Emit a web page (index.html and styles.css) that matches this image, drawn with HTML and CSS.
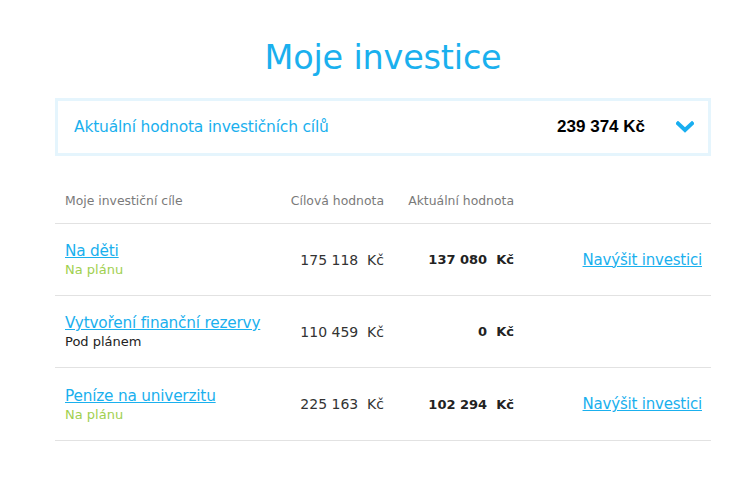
FILE: index.html
```html
<!DOCTYPE html>
<html lang="cs">
<head>
<meta charset="utf-8">
<title>Moje investice</title>
<link rel="stylesheet" href="styles.css">
</head>
<body>
<main class="page">
  <h1 class="title">Moje investice</h1>
  <div class="summary">
    <span class="summary-label">Aktuální hodnota investičních cílů</span>
    <span class="summary-value">239 374 Kč</span>
    <svg class="chevron" width="18" height="12" viewBox="0 0 18 12"><path d="M2 2.5 L9 9 L16 2.5" fill="none" stroke="#19aef0" stroke-width="4" stroke-linecap="square"/></svg>
  </div>
  <table class="goals">
    <colgroup>
      <col class="w-name">
      <col class="w-target">
      <col class="w-current">
      <col>
    </colgroup>
    <thead>
      <tr>
        <th class="c-name">Moje investiční cíle</th>
        <th class="c-num">Cílová hodnota</th>
        <th class="c-num">Aktuální hodnota</th>
        <th class="c-act"></th>
      </tr>
    </thead>
    <tbody>
      <tr>
        <td class="c-name"><a href="#" class="goal">Na děti</a><div class="status ok">Na plánu</div></td>
        <td class="c-num">175 118&nbsp; Kč</td>
        <td class="c-num strong">137 080&nbsp; Kč</td>
        <td class="c-act"><a href="#" class="more">Navýšit investici</a></td>
      </tr>
      <tr>
        <td class="c-name"><a href="#" class="goal">Vytvoření finanční rezervy</a><div class="status">Pod plánem</div></td>
        <td class="c-num">110 459&nbsp; Kč</td>
        <td class="c-num strong">0&nbsp; Kč</td>
        <td class="c-act"></td>
      </tr>
      <tr>
        <td class="c-name"><a href="#" class="goal">Peníze na univerzitu</a><div class="status ok">Na plánu</div></td>
        <td class="c-num">225 163&nbsp; Kč</td>
        <td class="c-num strong">102 294&nbsp; Kč</td>
        <td class="c-act"><a href="#" class="more">Navýšit investici</a></td>
      </tr>
    </tbody>
  </table>
</main>
</body>
</html>
```
FILE: styles.css
```css
html, body {
  margin: 0;
  padding: 0;
  background: #fff;
}
body {
  font-family: "DejaVu Sans", "Liberation Sans", sans-serif;
  color: #222;
}
.page {
  width: 656px;
  margin-left: 55px;
  padding-top: 35px;
}
.title {
  margin: 0;
  text-align: center;
  font-weight: 400;
  font-size: 33.5px;
  line-height: 46px;
  color: #1ab0ee;
  letter-spacing: -0.2px;
}
.summary {
  margin-top: 17px;
  height: 52px;
  border: 3px solid #e5f5fd;
  display: flex;
  align-items: center;
  padding: 0 14px 0 16px;
}
.summary-label {
  flex: 1;
  color: #1ab0ee;
  font-size: 15.5px;
  font-weight: 400;
  letter-spacing: -0.2px;
}
.summary-value {
  font-family: "Liberation Sans", Arial, sans-serif;
  font-weight: bold;
  font-size: 17px;
  color: #000;
  margin-right: 31px;
}
.chevron {
  display: block;
}
.goals {
  margin-top: 22px;
  width: 100%;
  border-collapse: collapse;
  table-layout: fixed;
}
.w-name { width: 219px; }
.w-target { width: 110px; }
.w-current { width: 130px; }
.goals th {
  font-weight: 400;
  font-size: 12.4px;
  color: #7a7a7a;
  height: 45px;
  padding: 0;
  border-bottom: 1px solid #e2e2e2;
  white-space: nowrap;
}
.goals td {
  height: 71px;
  padding: 0;
  border-bottom: 1px solid #e2e2e2;
  font-size: 14px;
  font-weight: 400;
  color: #333;
}
.goals tbody tr:last-child td {
  height: 72px;
}
.c-name {
  text-align: left;
  padding-left: 10px !important;
  white-space: nowrap;
}
.c-num {
  text-align: right;
  white-space: nowrap;
}
.c-act {
  text-align: right;
  padding-right: 9px !important;
}
.goals td.strong {
  font-weight: bold;
  font-size: 13px;
  color: #222;
}
.goal {
  color: #1ab0ee;
  font-size: 15.3px;
  font-weight: 400;
  letter-spacing: -0.2px;
}
.status {
  font-size: 13px;
  color: #222;
  margin-top: 2px;
  font-weight: 400;
}
.status.ok {
  color: #9fd050;
}
.more {
  color: #1ab0ee;
  font-size: 15px;
  font-weight: 400;
  letter-spacing: -0.2px;
}
```
